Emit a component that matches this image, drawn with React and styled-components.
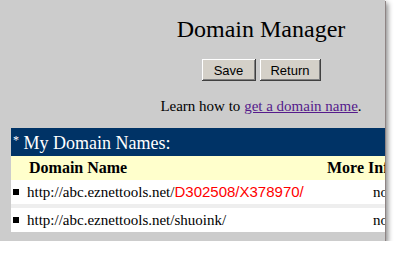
import React from "react";
import styled, { createGlobalStyle } from "styled-components";

const Global = createGlobalStyle`
  html, body { margin: 0; padding: 0; background: #ffffff; }
  body { font-family: "Liberation Serif", "Times New Roman", serif; }
`;

const Panel = styled.div`
  width: 385px;
  height: 241px;
  background: #cccccc;
  overflow: hidden;
  box-shadow: 1px 1px 0 #8e8484, 3px 3px 5px rgba(0, 0, 0, 0.45);
`;

const Page = styled.div`
  width: 522px;
  padding-top: 15px;
  display: flex;
  flex-direction: column;
  align-items: center;
  color: #000;
`;

const Title = styled.h1`
  margin: 0;
  font-weight: normal;
  font-size: 24px;
  line-height: 28px;
  font-family: "Liberation Serif", serif;
`;

const Buttons = styled.div`
  display: flex;
  gap: 4px;
  margin-top: 16px;
`;

const Button = styled.button`
  height: 22px;
  width: ${(p) => p.$w}px;
  padding: 0;
  background: #d4d0c8;
  border: none;
  box-shadow: inset -1px -1px #404040, inset 1px 1px #ffffff,
    inset -2px -2px #808080, inset 2px 2px #d4d0c8;
  font-family: "Liberation Sans", Arial, sans-serif;
  font-size: 13px;
  color: #000;
`;

const Learn = styled.p`
  margin: 16px 0 0;
  font-size: 15px;
  line-height: 18px;
  a { color: #551a8b; }
`;

const Table = styled.div`
  width: 500px;
  margin-top: 13px;
  display: flex;
  flex-direction: column;
  background: #eeeeee;
`;

const Caption = styled.div`
  height: 28px;
  background: #003366;
  color: #ffffff;
  font-size: 18px;
  line-height: 26px;
  padding: 2px 0 0 2px;
  box-sizing: border-box;
  sup { font-size: 12px; vertical-align: 5px; line-height: 0; }
`;

const HeadRow = styled.div`
  height: 24px;
  background: #ffffcc;
  display: flex;
  font-weight: bold;
  font-size: 16px;
  line-height: 24px;
`;

const Rows = styled.div`
  display: flex;
  flex-direction: column;
  gap: 4px;
`;

const Row = styled.div`
  height: 24px;
  background: #ffffff;
  display: flex;
  font-size: 15px;
  line-height: 24px;
`;

const BulletCell = styled.div`
  width: 16px;
  flex: none;
  display: flex;
  align-items: center;
  padding-left: 2px;
  box-sizing: border-box;
  &::before {
    content: "";
    width: 6px;
    height: 6px;
    background: #000;
    margin-top: -1px;
  }
`;

const NameCell = styled.div`
  width: ${(p) => p.$w}px;
  flex: none;
  white-space: nowrap;
  padding-left: ${(p) => p.$pad || 0}px;
  box-sizing: border-box;
`;

const InfoCell = styled.div`
  flex: 1;
  white-space: nowrap;
  padding-left: ${(p) => p.$pad || 0}px;
`;

const Red = styled.span`
  color: #ff0000;
  font-family: "Liberation Sans", Arial, sans-serif;
  font-size: 15px;
`;

const rows = [
  { base: "http://abc.eznettools.net/", red: "D302508/X378970/", info: "no" },
  { base: "http://abc.eznettools.net/shuoink/", red: "", info: "no" },
];

export default function App() {
  return (
    <>
      <Global />
      <Panel>
        <Page>
          <Title>Domain Manager</Title>
          <Buttons>
            <Button $w={54}>Save</Button>
            <Button $w={61}>Return</Button>
          </Buttons>
          <Learn>
            Learn how to <a href="#">get a domain name</a>.
          </Learn>
          <Table>
            <Caption>
              <sup>*</sup> My Domain Names:
            </Caption>
            <HeadRow>
              <NameCell $w={316} $pad={18}>Domain Name</NameCell>
              <InfoCell>More Info</InfoCell>
            </HeadRow>
            <Rows>
              {rows.map((r, i) => (
                <Row key={i}>
                  <BulletCell />
                  <NameCell $w={300}>
                    {r.base}
                    {r.red && <Red>{r.red}</Red>}
                  </NameCell>
                  <InfoCell $pad={46}>{r.info}</InfoCell>
                </Row>
              ))}
            </Rows>
          </Table>
        </Page>
      </Panel>
    </>
  );
}
